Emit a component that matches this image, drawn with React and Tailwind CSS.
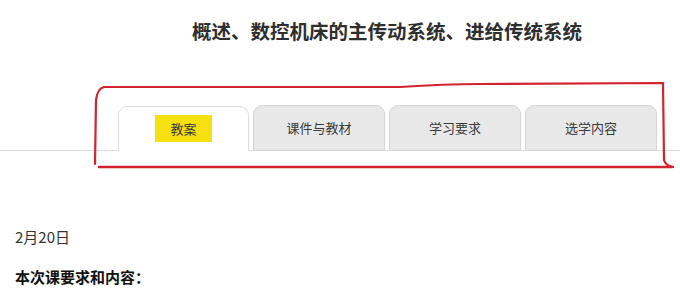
export default function App() {
  const tabs = [
    { key: 'jiaoan', label: '教案' },
    { key: 'kejian', label: '课件与教材' },
    { key: 'yaoqiu', label: '学习要求' },
    { key: 'xuanxue', label: '选学内容' },
  ];
  const active = 'jiaoan';

  return (
    <div className="relative h-[294px] w-[680px] overflow-hidden bg-white font-['Noto_Sans_CJK_SC',sans-serif] text-[#333]">
      <h1 className="pl-[192px] pt-[18px] text-[19.5px] font-bold leading-[26px] text-[#2e2e2e]">
        概述、数控机床的主传动系统、进给传统系统
      </h1>

      {/* tab bar */}
      <div className="mt-[61px] flex h-[46px] items-end gap-1 border-b border-[#dcdcdc] pl-[118px]">
        {tabs.map((t) =>
          t.key === active ? (
            <div
              key={t.key}
              className="-mb-px flex h-[45px] w-[131px] items-center justify-center rounded-t-[9px] border border-[#dcdcdc] border-b-white bg-white"
            >
              <span className="bg-[#f7e010] px-[15px] py-[4px] text-[13px] leading-[19px] text-[#3a3a3a]">
                {t.label}
              </span>
            </div>
          ) : (
            <div
              key={t.key}
              className="-mb-px flex h-[46px] w-[132px] items-center justify-center rounded-t-[9px] border border-[#d6d6d6] bg-[#e8e8e8] text-[13px] text-[#3a3a3a]"
            >
              {t.label}
            </div>
          )
        )}
      </div>

      <div className="pl-[15px] pt-[75px]">
        <p className="text-[15px] leading-[22px] text-[#333]">2月20日</p>
        <p className="mt-[18px] text-[15px] font-bold leading-[22px] text-[#111]">本次课要求和内容：</p>
      </div>

      {/* hand-drawn red annotation */}
      <svg className="pointer-events-none absolute left-0 top-0" width="680" height="294" viewBox="0 0 680 294">
        <path
          d="M104 87 C99 88 97 92 96 100 L95 164"
          fill="none"
          stroke="#d3232f"
          strokeWidth="2.2"
          strokeLinecap="round"
        />
        <path
          d="M104 87 L400 87 C430 85 450 84 480 84 L663 83 L664 160 C665 164 668 166 673 167"
          fill="none"
          stroke="#d3232f"
          strokeWidth="2.2"
          strokeLinecap="round"
        />
        <path d="M99 167 L672 167" fill="none" stroke="#d3232f" strokeWidth="2.6" strokeLinecap="round" />
      </svg>
    </div>
  );
}
